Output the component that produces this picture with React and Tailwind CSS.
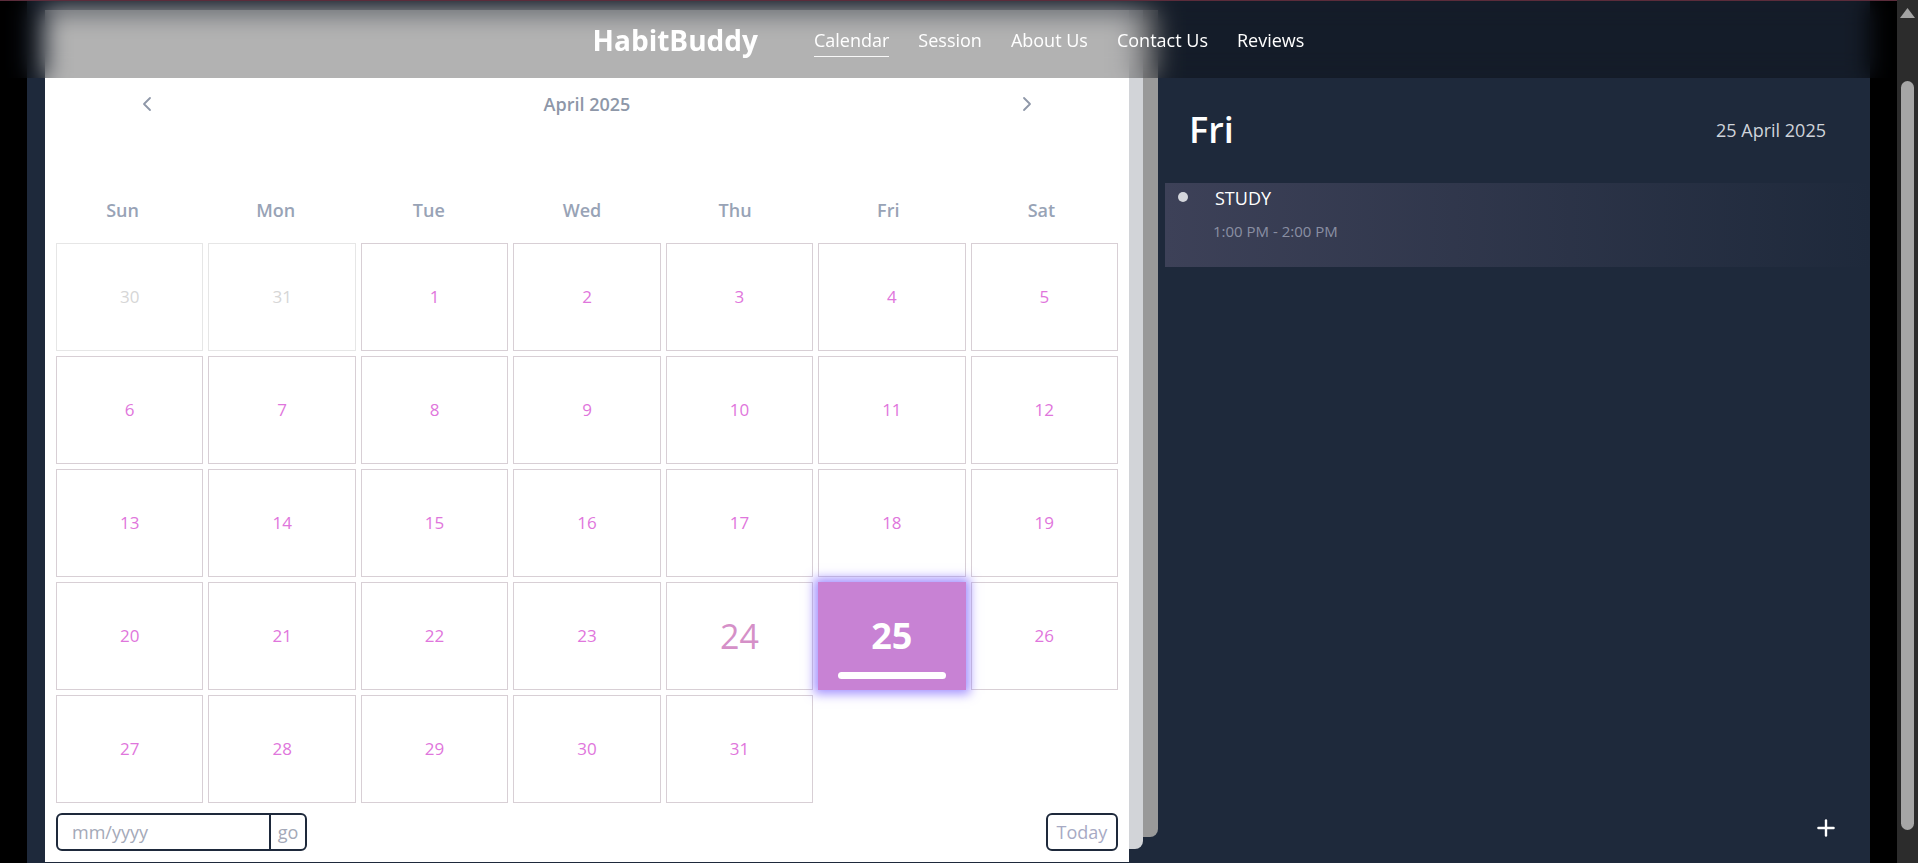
import { ChevronLeft, ChevronRight, Plus } from 'lucide-react';

const weekdays = ['Sun', 'Mon', 'Tue', 'Wed', 'Thu', 'Fri', 'Sat'];

const weeks = [
  [{ d: 30, muted: true }, { d: 31, muted: true }, { d: 1 }, { d: 2 }, { d: 3 }, { d: 4 }, { d: 5 }],
  [{ d: 6 }, { d: 7 }, { d: 8 }, { d: 9 }, { d: 10 }, { d: 11 }, { d: 12 }],
  [{ d: 13 }, { d: 14 }, { d: 15 }, { d: 16 }, { d: 17 }, { d: 18 }, { d: 19 }],
  [{ d: 20 }, { d: 21 }, { d: 22 }, { d: 23 }, { d: 24, today: true }, { d: 25, selected: true }, { d: 26 }],
  [{ d: 27 }, { d: 28 }, { d: 29 }, { d: 30 }, { d: 31 }, null, null],
];

const links = ['Calendar', 'Session', 'About Us', 'Contact Us', 'Reviews'];

function DayCell({ day }) {
  if (!day) return <div />;
  if (day.selected) {
    return (
      <div className="relative flex items-center justify-center bg-[#c882d4] shadow-[0_0_10px_4px_rgba(125,100,255,0.7)]">
        <span className="text-[36px] font-bold text-white leading-none">{day.d}</span>
        <span className="absolute left-[20px] right-[20px] bottom-[11px] h-[7px] rounded-full bg-white" />
      </div>
    );
  }
  if (day.muted) {
    return (
      <div className="flex items-center justify-center border border-[#e6e6e6] text-[17px] text-[#d6d6d6]">
        {day.d}
      </div>
    );
  }
  return (
    <div
      className={
        day.today
          ? 'flex items-center justify-center border border-[#d8cfd5] text-[34px] text-[#d590c8]'
          : 'flex items-center justify-center border border-[#d8cfd5] text-[17px] text-[#df76dc]'
      }
    >
      {day.d}
    </div>
  );
}

function Navbar() {
  return (
    <header className="absolute left-0 right-0 top-0 h-[78px] border-t border-[#5b2c3b] bg-black/30 backdrop-blur-md flex items-center justify-center z-10">
      <span className="text-[28px] font-bold text-white leading-[36px] mr-[56px]">HabitBuddy</span>
      <nav className="flex items-center gap-[29px] text-[18px] text-white leading-[24px]">
        {links.map((l, i) => (
          <a key={l} href="#" className="flex flex-col items-stretch">
            <span>{l}</span>
            {i === 0 ? <span className="h-[1.5px] bg-white/90 mt-[4px] -mb-[5.5px]" /> : null}
          </a>
        ))}
      </nav>
    </header>
  );
}

function Calendar() {
  return (
    <section className="mt-[10px] h-[852px] w-[1084px] shrink-0 bg-white px-[11px] pt-[74px] flex flex-col">
      <div className="h-[40px] flex items-center justify-between px-[79px]">
        <ChevronLeft size={24} strokeWidth={1.8} className="text-[#8e97a8]" />
        <span className="text-[18px] font-semibold text-[#8e97a8]">April 2025</span>
        <ChevronRight size={24} strokeWidth={1.8} className="text-[#8e97a8]" />
      </div>

      <div className="mt-[74px] h-[24px] grid grid-cols-7 -ml-[10px] text-[18px] font-semibold text-[#98a3b6] leading-[24px]">
        {weekdays.map((w) => (
          <div key={w} className="text-center">{w}</div>
        ))}
      </div>

      <div className="mt-[21px] grid grid-cols-7 auto-rows-[108px] gap-[5px]">
        {weeks.flat().map((day, i) => (
          <DayCell key={i} day={day} />
        ))}
      </div>

      <div className="mt-[10px] flex items-start justify-between">
        <div className="flex h-[38px] w-[251px] rounded-[6px] border-2 border-[#1e293b] overflow-hidden">
          <input
            type="text"
            placeholder="mm/yyyy"
            className="w-[211px] pl-[14px] text-[18px] text-[#475569] placeholder:text-[#a4a9b8] outline-none"
          />
          <button type="button" className="flex-1 border-l-2 border-[#1e293b] text-[18px] text-[#a4a9b8] leading-none">
            go
          </button>
        </div>
        <button
          type="button"
          className="h-[38px] w-[72px] rounded-[6px] border-2 border-[#1e293b] text-[18px] text-[#a7aac4]"
        >
          Today
        </button>
      </div>
    </section>
  );
}

function DayPanel() {
  return (
    <aside className="flex-1 flex flex-col">
      <div className="mt-[106px] h-[48px] flex items-center justify-between pl-[31px] pr-[44px]">
        <span className="text-[36px] font-semibold text-white leading-none">Fri</span>
        <span className="text-[18px] text-[#cfd3da]">25 April 2025</span>
      </div>

      <div className="mt-[29px] ml-[7px] h-[84px] flex bg-gradient-to-r from-[#3d4158] to-[#1e293b]">
        <span className="mt-[9px] ml-[13px] h-[10px] w-[10px] rounded-full bg-[#d4d6dc]" />
        <div className="ml-[27px] flex flex-col">
          <span className="mt-[3px] text-[18px] leading-[24px] text-white">STUDY</span>
          <span className="mt-[11px] -ml-[2px] text-[15px] leading-[20px] text-[#8a8fa3]">1:00 PM - 2:00 PM</span>
        </div>
      </div>

      <button type="button" className="mt-auto self-end mr-[31px] mb-[22px] text-white">
        <Plus size={26} strokeWidth={2.2} />
      </button>
    </aside>
  );
}

function Scrollbar() {
  return (
    <div className="w-[21px] shrink-0 bg-[#2c2c2c] flex flex-col items-center">
      <svg width="15" height="10" viewBox="0 0 15 10" className="mt-[8px]">
        <polygon points="7.5,0 15,10 0,10" fill="#a3a3a3" />
      </svg>
      <div className="mt-[63px] h-[749px] w-[13px] rounded-full bg-[#a6a6a6]" />
    </div>
  );
}

export default function App() {
  return (
    <div className="h-[863px] w-full flex bg-black overflow-hidden font-['Open_Sans',sans-serif]">
      <div className="relative flex-1 flex px-[27px]">
        <Navbar />
        <main className="flex-1 flex items-start bg-[#1e293b] pl-[18px]">
          <Calendar />
          <div className="mt-[10px] h-[839px] w-[14px] shrink-0 rounded-br-[8px] bg-[#d2d4d8]" />
          <div className="mt-[10px] h-[827px] w-[15px] shrink-0 rounded-br-[8px] bg-[#999999]" />
          <div className="self-stretch flex-1 flex">
            <DayPanel />
          </div>
        </main>
      </div>
      <Scrollbar />
    </div>
  );
}
